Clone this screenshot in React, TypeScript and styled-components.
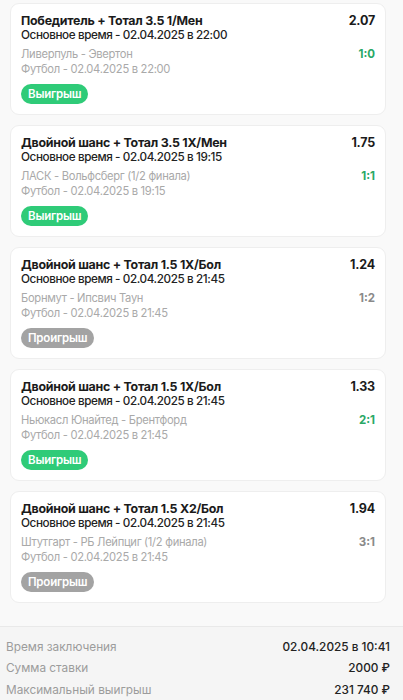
import styled, { createGlobalStyle } from "styled-components";

const GlobalStyle = createGlobalStyle`
  body {
    margin: 0;
    background: #f9f9f9;
    font-family: Inter, "Noto Sans", "Liberation Sans", sans-serif;
    -webkit-font-smoothing: antialiased;
  }
`;

const Page = styled.div`
  width: 403px;
  min-height: 700px;
  display: flex;
  flex-direction: column;
`;

const List = styled.div`
  display: flex;
  flex-direction: column;
  gap: 10px;
  padding: 3px 17px 0 10px;
`;

const Card = styled.div`
  background: #ffffff;
  border: 1px solid #eeeeee;
  border-radius: 9px;
  padding: 9px 10px 10px 10px;
  height: 112px;
  box-sizing: border-box;
  display: flex;
  flex-direction: column;
  align-items: flex-start;
`;

const Row = styled.div`
  width: 100%;
  display: flex;
  justify-content: space-between;
  align-items: center;
`;

const Title = styled.div`
  font-size: 12.4px;
  font-weight: 700;
  color: #1b1b1b;
  line-height: 15px;
  letter-spacing: -0.25px;
`;

const Odds = styled.div`
  font-size: 12.5px;
  font-weight: 700;
  color: #1b1b1b;
  line-height: 15px;
  letter-spacing: -0.2px;
`;

const Sub = styled.div`
  font-size: 11.7px;
  font-weight: 500;
  color: #222222;
  line-height: 15px;
  letter-spacing: -0.4px;
`;

const Muted = styled.div`
  font-size: 11.2px;
  color: #a9a9a9;
  line-height: 15px;
  letter-spacing: -0.3px;
`;

const Teams = styled(Row)`
  margin-top: 4px;
`;

const Score = styled.div<{ $win: boolean }>`
  font-size: 11.5px;
  font-weight: 700;
  color: ${(p) => (p.$win ? "#2aa866" : "#8a8a8a")};
  line-height: 15px;
`;

const Badge = styled.div<{ $win: boolean }>`
  margin-top: 7px;
  height: 21px;
  padding: 0 7px;
  border-radius: 11px;
  display: flex;
  align-items: center;
  font-size: 11.5px;
  font-weight: 600;
  letter-spacing: -0.2px;
  color: #ffffff;
  background: ${(p) => (p.$win ? "#2fcb78" : "#a3a3a3")};
`;

const Summary = styled.div`
  margin-top: 23px;
  border-top: 1px solid #e9e9e9;
  background: #f5f5f5;
  padding: 9px 13px 0 6px;
  flex: 1;
`;

const SumRow = styled.div`
  display: flex;
  justify-content: space-between;
  align-items: center;
  height: 21.5px;
  font-size: 11.8px;
`;

const SumLabel = styled.span`
  color: #9c9c9c;
`;

const SumValue = styled.span`
  color: #222222;
  font-weight: 500;
`;

type Bet = {
  title: string;
  odds: string;
  sub: string;
  teams: string;
  score: string;
  sport: string;
  win: boolean;
};

const bets: Bet[] = [
  {
    title: "Победитель + Тотал 3.5 1/Мен",
    odds: "2.07",
    sub: "Основное время - 02.04.2025 в 22:00",
    teams: "Ливерпуль - Эвертон",
    score: "1:0",
    sport: "Футбол - 02.04.2025 в 22:00",
    win: true,
  },
  {
    title: "Двойной шанс + Тотал 3.5 1X/Мен",
    odds: "1.75",
    sub: "Основное время - 02.04.2025 в 19:15",
    teams: "ЛАСК - Вольфсберг (1/2 финала)",
    score: "1:1",
    sport: "Футбол - 02.04.2025 в 19:15",
    win: true,
  },
  {
    title: "Двойной шанс + Тотал 1.5 1X/Бол",
    odds: "1.24",
    sub: "Основное время - 02.04.2025 в 21:45",
    teams: "Борнмут - Ипсвич Таун",
    score: "1:2",
    sport: "Футбол - 02.04.2025 в 21:45",
    win: false,
  },
  {
    title: "Двойной шанс + Тотал 1.5 1X/Бол",
    odds: "1.33",
    sub: "Основное время - 02.04.2025 в 21:45",
    teams: "Ньюкасл Юнайтед - Брентфорд",
    score: "2:1",
    sport: "Футбол - 02.04.2025 в 21:45",
    win: true,
  },
  {
    title: "Двойной шанс + Тотал 1.5 X2/Бол",
    odds: "1.94",
    sub: "Основное время - 02.04.2025 в 21:45",
    teams: "Штутгарт - РБ Лейпциг (1/2 финала)",
    score: "3:1",
    sport: "Футбол - 02.04.2025 в 21:45",
    win: false,
  },
];

export default function App() {
  return (
    <Page>
      <GlobalStyle />
      <List>
        {bets.map((b, i) => (
          <Card key={i}>
            <Row>
              <Title>{b.title}</Title>
              <Odds>{b.odds}</Odds>
            </Row>
            <Sub>{b.sub}</Sub>
            <Teams>
              <Muted>{b.teams}</Muted>
              <Score $win={b.win}>{b.score}</Score>
            </Teams>
            <Muted>{b.sport}</Muted>
            <Badge $win={b.win}>{b.win ? "Выигрыш" : "Проигрыш"}</Badge>
          </Card>
        ))}
      </List>
      <Summary>
        <SumRow>
          <SumLabel>Время заключения</SumLabel>
          <SumValue>02.04.2025 в 10:41</SumValue>
        </SumRow>
        <SumRow>
          <SumLabel>Сумма ставки</SumLabel>
          <SumValue>2000 ₽</SumValue>
        </SumRow>
        <SumRow>
          <SumLabel>Максимальный выигрыш</SumLabel>
          <SumValue>231 740 ₽</SumValue>
        </SumRow>
      </Summary>
    </Page>
  );
}
